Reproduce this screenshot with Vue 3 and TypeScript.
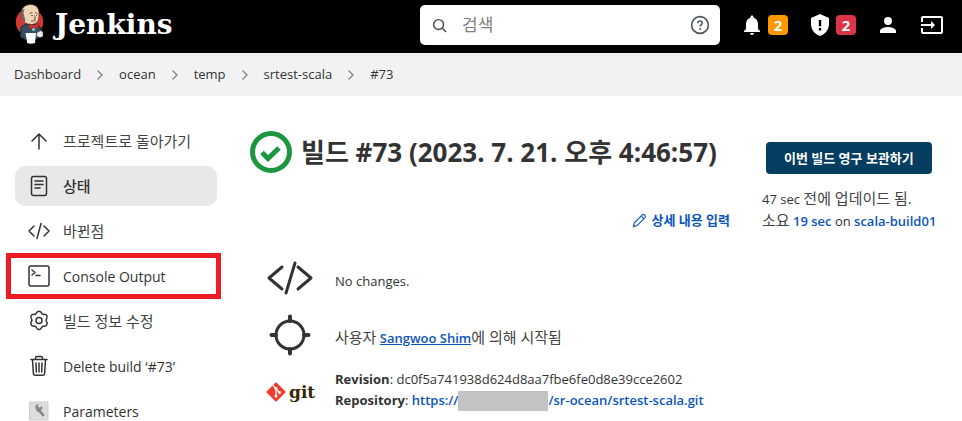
<script setup lang="ts">
import { ref } from 'vue'

interface Crumb {
  label: string
}

interface Task {
  icon: string
  label: string
  korean?: boolean
  active?: boolean
  marked?: boolean
}

const query = ref('')

const crumbs: Crumb[] = [
  { label: 'Dashboard' },
  { label: 'ocean' },
  { label: 'temp' },
  { label: 'srtest-scala' },
  { label: '#73' },
]

const tasks: Task[] = [
  { icon: 'up', label: '프로젝트로 돌아가기', korean: true },
  { icon: 'status', label: '상태', korean: true, active: true },
  { icon: 'changes', label: '바뀐점', korean: true },
  { icon: 'console', label: 'Console Output', marked: true },
  { icon: 'edit', label: '빌드 정보 수정', korean: true },
  { icon: 'delete', label: 'Delete build ‘#73’' },
  { icon: 'parameters', label: 'Parameters' },
]
</script>

<template>
  <div class="page">
    <header class="header">
      <a class="brand" href="#">
        <svg class="butler" viewBox="0 0 30 42" aria-hidden="true">
          <circle cx="14.500" cy="18" r="13.700" fill="#d33833" />
          <path d="M6 23 11 20 21 20.500 25 23 27 28 25 33 20 35.500H10L5.500 33Z" fill="#335061" stroke="#172a35" stroke-width="1" />
          <path d="M6.500 10C6 4 10 .5 15.500.5S24.500 4 24 10c.2 7-2.300 10.500-7.800 10.500S6.500 17 6.500 10Z" fill="#f0d6b7" stroke="#3b3430" stroke-width=".7" />
          <path d="M7.500 6C5.500 8 5.500 13 7.500 14.500l1.500 3.500 1.500-1-1-4-1-4 1-4Z" fill="#6d6b6d" />
          <path d="M14.500 9.500l3-1M20 8.500l2.500 1M16 11.500h2M21 11.500h1M19.500 11.500l1 3-2 .7M16 17q3 .6 5-1" fill="none" stroke="#3b2b24" stroke-width=".7" />
          <path d="M14 20l4 1.500 5-2v5l-5-1-4 2Z" fill="#d33833" stroke="#7d1714" stroke-width=".5" />
          <circle cx="18.500" cy="25.500" r="1.700" fill="#81b0c4" />
          <path d="M10.500 29h10.500l-1 10q-4 1.500-7.800 0Z" fill="#fff" />
          <path d="M22 28.500l4-2 2 2v4l-3 1-3.500-1.500Z" fill="#eee" stroke="#555" stroke-width=".6" />
        </svg>
        <span class="wordmark">Jenkins</span>
      </a>

      <label class="search">
        <svg class="search-glyph" viewBox="0 0 16 16" aria-hidden="true">
          <circle cx="7" cy="7" r="5.3" />
          <path d="M11 11l4 4" />
        </svg>
        <input v-model="query" type="search" placeholder="검색" aria-label="검색" />
        <button class="help" type="button" aria-label="도움말">
          <svg viewBox="0 0 20 20" aria-hidden="true">
            <circle cx="10" cy="10" r="8.4" />
            <path d="M7.7 8.2C7.8 5.2 12.3 5.3 12.3 8c0 1.7-2.2 1.8-2.2 3.4" />
            <circle class="dot" cx="10.1" cy="13.9" r="1" />
          </svg>
        </button>
      </label>

      <nav class="actions">
        <button class="action" type="button" aria-label="알림 2">
          <svg class="glyph" viewBox="0 0 24 24" aria-hidden="true">
            <path d="M12 22c1.1 0 2-.9 2-2h-4a2 2 0 0 0 2 2Zm6-6v-5c0-3.07-1.64-5.64-4.5-6.32V4c0-.83-.67-1.5-1.5-1.5s-1.5.67-1.5 1.5v.68C7.63 5.36 6 7.92 6 11v5l-2 2v1h16v-1l-2-2Z" />
          </svg>
          <span class="badge orange">2</span>
        </button>
        <button class="action" type="button" aria-label="보안 경고 2">
          <svg class="glyph" viewBox="0 0 24 24" aria-hidden="true">
            <path fill-rule="evenodd" d="M12 1 3 5v6c0 5.55 3.84 10.74 9 12 5.16-1.26 9-6.45 9-12V5l-9-4Zm-1.2 6h2.4v6.2h-2.4V7Zm0 8h2.4v2.4h-2.4V15Z" />
          </svg>
          <span class="badge red">2</span>
        </button>
        <a class="action" href="#" aria-label="사용자">
          <svg class="glyph" viewBox="0 0 24 24" aria-hidden="true">
            <path d="M12 12a4 4 0 1 0 0-8 4 4 0 0 0 0 8Zm0 2c-2.67 0-8 1.34-8 4v2h16v-2c0-2.66-5.33-4-8-4Z" />
          </svg>
        </a>
        <a class="action" href="#" aria-label="로그아웃">
          <svg class="glyph" viewBox="0 0 24 24" aria-hidden="true">
            <path d="M21 3H3c-1.1 0-2 .9-2 2v4h2V5h18v14H3v-4H1v4c0 1.1.9 2 2 2h18c1.1 0 2-.9 2-2V5c0-1.1-.9-2-2-2ZM11 16l4-4-4-4v3H1v2h10v3Z" />
          </svg>
        </a>
      </nav>
    </header>

    <nav class="crumbs">
      <template v-for="(crumb, i) in crumbs" :key="crumb.label">
        <svg v-if="i > 0" class="chevron" viewBox="0 0 8 12" aria-hidden="true">
          <path d="M1.5 1.5 6 6l-4.500 4.500" />
        </svg>
        <a href="#">{{ crumb.label }}</a>
      </template>
    </nav>

    <div class="body">
      <aside class="sidebar">
        <a
          v-for="task in tasks"
          :key="task.icon"
          class="task"
          :class="{ active: task.active, marked: task.marked }"
          href="#"
        >
          <svg class="task-icon" viewBox="0 0 24 24" aria-hidden="true">
            <path v-if="task.icon === 'up'" d="M12 20V5M5 12l7-7 7 7" />
            <g v-else-if="task.icon === 'status'">
              <rect x="4.500" y="2.500" width="15" height="19" rx="2" />
              <path d="M8 7h8M8 10.500h8M8 14h5" />
            </g>
            <path v-else-if="task.icon === 'changes'" d="M7 7l-5 5 5 5M17 7l5 5-5 5M14 4.500l-4 15" />
            <g v-else-if="task.icon === 'console'">
              <rect x="2" y="2" width="20" height="20" rx="2" />
              <path d="M5 6l3 2.500L5 11M9 11.500h4" />
            </g>
            <g v-else-if="task.icon === 'edit'">
              <path d="M9.200 4.400C9.900 2.700 10.800 2.300 12 2.300s2.100.4 2.800 2.100c.3.700 1 1.100 1.800 1 1.800-.3 2.600.3 3.200 1.300s.7 2-.4 3.500c-.5.700-.5 1.500 0 2.100 1.100 1.500 1 2.400.4 3.500s-1.400 1.600-3.200 1.400c-.8-.1-1.500.3-1.800 1-.7 1.700-1.600 2.300-2.800 2.300s-2.100-.6-2.800-2.300c-.3-.7-1-1.100-1.800-1-1.800.2-2.600-.3-3.200-1.400s-.7-2 .4-3.500c.5-.6.5-1.400 0-2.100-1.100-1.500-1-2.500-.4-3.500s1.400-1.600 3.200-1.300c.8.100 1.500-.3 1.800-1Z" />
              <circle cx="12" cy="11.500" r="3" />
            </g>
            <g v-else-if="task.icon === 'delete'">
              <path d="M4 5.500h16M8.500 5V4q0-1.500 1.500-1.500h4q1.500 0 1.500 1.500v1M5.500 6l.9 13.500q.1 1.800 2 1.800h7.200q1.900 0 2-1.800L18.500 6M9 9l.3 9M12 9v9M15 9l-.3 9" />
            </g>
            <g v-else>
              <rect class="plate" x="3" y="3" width="18" height="18" />
              <path class="wrench" d="M8.500 9c-1-2.400 1.300-4.400 3.400-3.600L10.800 7l1 1.500 2-.3.600-1.400c1.700 1.400 1.200 3.800-.6 4.600l4 4.600-1.900 1.700-4.300-4.800C10 13 8.900 11.500 8.500 9Z" />
            </g>
          </svg>
          <span :class="{ ko: task.korean }">{{ task.label }}</span>
        </a>
      </aside>

      <main class="main">
        <div class="content">
          <div class="title">
            <svg class="result" viewBox="0 0 42 42" aria-hidden="true">
              <circle cx="21" cy="21" r="18.500" />
              <path d="M12 21.500l6 6L29 17" />
            </svg>
            <h1>빌드 #73 (2023. 7. 21. 오후 4:46:57)</h1>
          </div>
          <a class="describe" href="#">
            <svg viewBox="0 0 16 16" aria-hidden="true">
              <path d="M1.500 14.500l1-4L11 2q1.200-1.100 2.500.2 1.500 1.400.3 2.700L5.500 13.400ZM9.700 3.300l3 3" />
            </svg>
            <span>상세 내용 입력</span>
          </a>

          <div class="facts">
            <div class="fact">
              <svg class="fact-icon" viewBox="0 0 48 48" aria-hidden="true">
                <path d="M16 13 3 24l13 11M32 13l13 11-13 11M29 9l-9 30" />
              </svg>
              <p>No changes.</p>
            </div>
            <div class="fact">
              <svg class="fact-icon" viewBox="0 0 48 48" aria-hidden="true">
                <circle cx="24" cy="24" r="14" />
                <path class="ticks" d="M24 5.500V10M24 38v4.500M5.500 24H10M38 24h4.500" />
              </svg>
              <p><span class="ko">사용자</span> <a class="user" href="#">Sangwoo Shim</a><span class="ko">에 의해 시작됨</span></p>
            </div>
            <div class="fact source">
              <span class="git">
                <svg viewBox="0 0 20 20" aria-hidden="true">
                  <rect x="3" y="3" width="14" height="14" rx="1" transform="rotate(45 10 10)" />
                  <path d="M7 3.500l3 3V14M10 7l3.500 3.500" />
                  <circle cx="10" cy="6.500" r="1.500" />
                  <circle cx="10" cy="14" r="1.500" />
                  <circle cx="13.500" cy="10.500" r="1.500" />
                </svg>
                <span>git</span>
              </span>
              <p>
                <b>Revision</b>: dc0f5a741938d624d8aa7fbe6fe0d8e39cce2602<br />
                <b>Repository</b>: <a href="#">https://<span class="redacted"></span>/sr-ocean/srtest-scala.git</a>
              </p>
            </div>
          </div>
        </div>

        <div class="side">
          <button class="keep" type="button">이번 빌드 영구 보관하기</button>
          <p>
            47 sec <span class="ko">전에 업데이드 됨.</span><br />
            <span class="ko">소요</span> <a href="#">19 sec</a> on <a href="#">scala-build01</a>
          </p>
        </div>
      </main>
    </div>
  </div>
</template>

<style>
body {
  margin: 0;
  background: #fff;
}
</style>

<style scoped>
.page {
  height: 100vh;
  overflow: hidden;
  color: #333;
  font: 13px/21px "Open Sans", "Noto Sans CJK KR", sans-serif;
}

a {
  color: #0b55bb;
  font-weight: 600;
  text-decoration: none;
}

p,
h1 {
  margin: 0;
}

button {
  border: 0;
  background: none;
  padding: 0;
  font: inherit;
  color: inherit;
}

svg {
  display: block;
  flex: none;
}

.ko {
  color: #444;
  font-size: 15px;
}

.header {
  display: flex;
  align-items: center;
  height: 53px;
  padding: 0 18px 3px 15px;
  background: #000;
  box-sizing: border-box;
}

.brand {
  display: flex;
  align-items: center;
  gap: 10px;
  color: #fff;
}

.butler {
  width: 30px;
  height: 42px;
}

.wordmark {
  font: bold 28px/44px "DejaVu Serif", serif;
}

.search {
  display: flex;
  align-items: center;
  gap: 15px;
  width: 300px;
  height: 40px;
  margin-left: auto;
  padding: 0 10px 0 12px;
  border-radius: 5px;
  background: #fff;
  box-sizing: border-box;
}

.search-glyph {
  width: 15px;
  height: 15px;
  fill: none;
  stroke: #444;
  stroke-width: 1.5;
}

.search input {
  flex: 1;
  min-width: 0;
  padding: 0;
  border: 0;
  outline: 0;
  background: none;
  font: 17px/24px "Open Sans", "Noto Sans CJK KR", sans-serif;
}

.search input::placeholder {
  color: #808080;
}

.help svg {
  width: 20px;
  height: 20px;
  fill: none;
  stroke: #4d545d;
  stroke-width: 1.6;
}

.help .dot {
  fill: #4d545d;
  stroke: none;
}

.actions {
  display: flex;
  gap: 20px;
  margin-left: 20px;
}

.action {
  display: flex;
  align-items: center;
  gap: 4px;
  color: #fff;
}

.glyph {
  width: 24px;
  height: 24px;
  fill: #fff;
}

.badge {
  width: 20px;
  border-radius: 4px;
  font-size: 15px;
  font-weight: 700;
  line-height: 20px;
  text-align: center;
}

.orange {
  background: #ff9800;
}

.red {
  background: #dc3545;
}

.crumbs {
  display: flex;
  align-items: center;
  gap: 15px;
  height: 43px;
  padding: 0 14px;
  background: #f2f2f2;
}

.crumbs a {
  color: #333;
  font-weight: 500;
}

.chevron {
  width: 8px;
  height: 12px;
  fill: none;
  stroke: #888;
  stroke-width: 1.4;
}

.body {
  display: flex;
  gap: 33px;
  padding: 25px 28px 0 15px;
}

.sidebar {
  display: flex;
  flex: none;
  flex-direction: column;
  gap: 5px;
  width: 202px;
}

.task {
  position: relative;
  display: flex;
  align-items: center;
  gap: 12px;
  height: 40px;
  padding: 0 12px;
  border-radius: 10px;
  color: #333;
  font-size: 14px;
  font-weight: 500;
}

.task .ko {
  font-weight: 400;
}

.active {
  background: #e8e8e8;
}

.active .ko {
  color: #333;
  font-weight: 500;
}

.marked::after {
  content: "";
  position: absolute;
  inset: -3px -4px -3px -9px;
  border: 5px solid #ed1c24;
}

.task-icon {
  width: 24px;
  height: 24px;
  fill: none;
  stroke: #333;
  stroke-width: 1.5;
  stroke-linecap: round;
  stroke-linejoin: round;
}

.plate {
  fill: #ddd;
  stroke: #ccc;
  stroke-width: 1;
}

.wrench {
  fill: #888;
  stroke: none;
}

.main {
  display: flex;
  flex: 1;
  gap: 32px;
  min-width: 0;
}

.content {
  flex: 1;
  min-width: 0;
}

.title {
  display: flex;
  align-items: center;
  gap: 9px;
  padding-top: 10px;
}

.title h1 {
  font-size: 26px;
  line-height: 42px;
  white-space: nowrap;
}

.result {
  width: 42px;
  height: 42px;
  fill: none;
  stroke: #1d9640;
  stroke-width: 5;
}

.describe {
  display: flex;
  align-items: center;
  justify-content: flex-end;
  gap: 4px;
  margin-top: 37px;
}

.describe svg {
  width: 15px;
  height: 15px;
  fill: none;
  stroke: #0b55bb;
  stroke-width: 1.2;
}

.facts {
  display: flex;
  flex-direction: column;
  gap: 9px;
  margin-top: 23px;
  padding-left: 16px;
}

.fact {
  display: flex;
  align-items: center;
  gap: 21px;
  height: 48px;
}

.fact p {
  padding-top: 6px;
}

.fact.source p {
  padding: 0 0 4px;
}

.fact-icon {
  width: 48px;
  height: 48px;
  fill: none;
  stroke: #333;
  stroke-width: 3;
  stroke-linecap: round;
  stroke-linejoin: round;
}

.ticks {
  stroke-width: 4;
}

.user {
  text-decoration: underline;
}

.git {
  display: flex;
  align-items: center;
  gap: 3px;
  width: 48px;
  color: #362701;
  font: bold 17px/24px "DejaVu Serif", serif;
}

.git svg {
  width: 20px;
  height: 20px;
  fill: #f03c2e;
}

.git path {
  fill: none;
  stroke: #fff;
  stroke-width: 1.3;
}

.git circle {
  fill: #fff;
}

.redacted {
  display: inline-block;
  width: 90px;
  height: 20px;
  background: #c3c3c3;
  vertical-align: middle;
}

.side {
  flex: none;
  width: 172px;
  padding-top: 21px;
}

.side p {
  margin-top: 14px;
  white-space: nowrap;
}

.keep {
  display: block;
  height: 32px;
  margin-left: 4px;
  padding: 0 18px;
  border-radius: 4px;
  background: #063e61;
  color: #fff;
  font-weight: 700;
}
</style>
